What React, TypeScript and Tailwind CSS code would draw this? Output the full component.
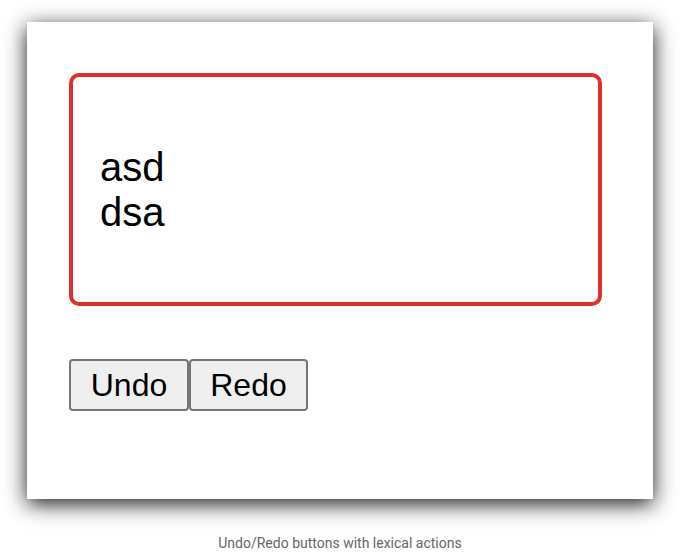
import React from "react";

export default function App() {
  return (
    <div className="w-[680px] h-[554px] bg-white flex flex-col" style={{ fontFamily: '"Liberation Sans", Arial, sans-serif' }}>
      <div className="ml-[27px] mt-[22px] w-[626px] h-[480px] bg-white shadow-[0_5px_20px_rgba(0,0,0,0.9)] pl-[42px] pt-[51px]">
        <div className="w-[533px] h-[233px] border-4 border-[#dc3328] rounded-[10px] pl-[27px] pt-[68px] text-[40px] leading-[45px] text-black">
          <p>asd</p>
          <p>dsa</p>
        </div>
        <div className="flex mt-[53px]">
          <button className="w-[120px] h-[52px] bg-[#efefef] border-2 border-[#767676] rounded-[4px] text-[32px] leading-[44px] text-black">Undo</button>
          <button className="w-[119px] h-[52px] bg-[#efefef] border-2 border-[#767676] rounded-[4px] text-[32px] leading-[44px] text-black">Redo</button>
        </div>
      </div>
      <div className="mt-[34px] text-center text-[14px] text-[#666]" style={{ fontFamily: 'Roboto, sans-serif' }}>
        Undo/Redo buttons with lexical actions
      </div>
    </div>
  );
}
